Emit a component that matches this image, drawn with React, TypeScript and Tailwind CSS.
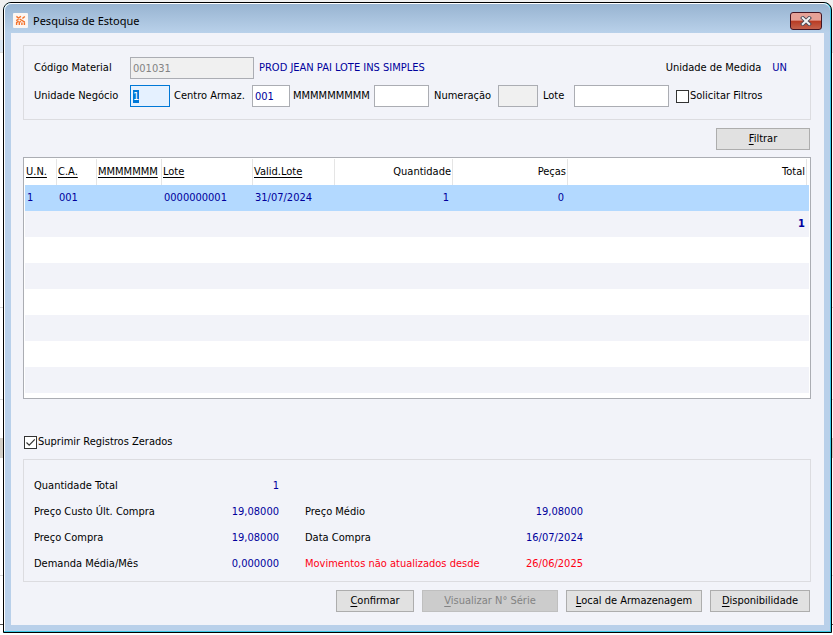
import React, { useEffect, useRef, useState } from "react";
import { clsx } from "clsx";

interface StockRow {
  un: string;
  ca: string;
  lot: string;
  expiry: string;
  quantity: string;
  pieces: string;
}

const ROWS: StockRow[] = [
  { un: "1", ca: "001", lot: "0000000001", expiry: "31/07/2024", quantity: "1", pieces: "0" },
];

// Blank lines that fill the grid below the total line
const EMPTY_ROWS = [0, 1, 2, 3, 4, 5];

const FIELD = "h-[22px] border border-[#abadb3] px-0.5 pt-px text-[#00009c] bg-white outline-none";

const LogoIcon = () => (
  <svg viewBox="0 0 15 15" className="h-[15px] w-[15px] shrink-0" aria-hidden="true">
    <rect width="15" height="15" rx="1" fill="#fdf6f2" />
    <g stroke="#f4722b" strokeWidth="1.4" fill="none">
      <path d="M3.4 3.4l2 1.6L8 3.4M9.4 5.6l2.4-2.2M3.2 7.6l2.4-1.4M6.6 6l5.2 3.2M3.6 12V9.6l2-1.6M6.3 12V9.4l1.6-1.2M8.9 12V9.4M11.4 12V9.6" />
    </g>
  </svg>
);

const CloseIcon = () => (
  <svg viewBox="0 0 12 10" className="h-[10px] w-[12px]" aria-hidden="true">
    <path d="M2.8 2l6.4 6M9.2 2l-6.4 6" stroke="#4b4a58" strokeWidth="3.8" strokeLinecap="square" />
    <path d="M2.8 2l6.4 6M9.2 2l-6.4 6" stroke="#f4f4f4" strokeWidth="2" strokeLinecap="square" />
  </svg>
);

interface CheckProps {
  label: string;
  initial?: boolean;
}

const Check: React.FC<CheckProps> = ({ label, initial = false }) => {
  const [checked, setChecked] = useState(initial);

  return (
    <label className="flex items-center gap-px whitespace-nowrap">
      <span className="relative block h-[13px] w-[13px]">
        <input
          type="checkbox"
          checked={checked}
          onChange={() => setChecked(!checked)}
          className="block h-[13px] w-[13px] appearance-none border border-[#333] bg-white"
        />
        {checked && (
          <svg viewBox="0 0 13 13" className="pointer-events-none absolute inset-0" aria-hidden="true">
            <path d="M2.5 6.5l2.7 2.7L10.8 3.4" stroke="#333" strokeWidth="1.2" fill="none" />
          </svg>
        )}
      </span>
      {label}
    </label>
  );
};

interface ActionButtonProps {
  label: string;
  className: string;
  disabled?: boolean;
}

const ActionButton: React.FC<ActionButtonProps> = ({ label, className, disabled }) => (
  <button
    type="button"
    disabled={disabled}
    className={clsx(
      "h-[22px] border whitespace-nowrap",
      disabled ? "border-[#bfbfbf] bg-[#cccccc] text-[#838383]" : "border-[#adadad] bg-[#e1e1e1]",
      className
    )}
  >
    <span className="underline underline-offset-2">{label[0]}</span>
    {label.slice(1)}
  </button>
);

// The parent window that shows round the edges of the dialog
const Backdrop = () => (
  <div className="absolute inset-0 -z-10 overflow-hidden bg-white" aria-hidden="true">
    <div className="h-10 bg-[#f0f0f0]" />
    <div className="h-[13px] border-b border-[#dcdcdc] bg-[#dbe7f3]" />
    <div className="mt-[254px] border-t border-[#dcdcdc]" />
    <div className="mt-[91px] border-t border-[#dcdcdc]" />
    <div className="mt-[38px] h-5 bg-[#d4d0c8]" />
    <div className="mt-[117px] border-t border-[#dcdcdc]" />
    <div className="mt-[48px] border-t border-[#555]" />
  </div>
);

const Filters = () => {
  const unitRef = useRef<HTMLInputElement>(null);

  useEffect(() => {
    unitRef.current?.focus();
    unitRef.current?.select();
  }, []);

  return (
    <section className="space-y-1.5 border border-[#dcdce0] pt-[11px] pr-[23px] pb-3 pl-2.5">
      <div className="flex items-center">
        <label htmlFor="material" className="w-24 shrink-0">
          Código Material
        </label>
        <input
          id="material"
          disabled
          defaultValue="001031"
          className="h-[22px] w-[124px] border border-[#abadb3] bg-[#f0f0f0] px-0.5 pt-px text-[#838383]"
        />
        <span className="ml-[5px] text-[#00009c]">PROD JEAN PAI LOTE INS SIMPLES</span>
        <span className="ml-auto">Unidade de Medida</span>
        <span className="ml-[11px] text-[#00009c]">UN</span>
      </div>
      <div className="flex items-center whitespace-nowrap">
        <label htmlFor="unit" className="w-24 shrink-0">
          Unidade Negócio
        </label>
        <input
          id="unit"
          ref={unitRef}
          defaultValue="1"
          className="h-[22px] w-10 border border-[#0078d7] bg-[#e5f1ff] px-0.5 text-[#00009c] outline-none selection:bg-[#0078d7] selection:text-white"
        />
        <label htmlFor="center" className="ml-1 w-[78px] shrink-0">
          Centro Armaz.
        </label>
        <input id="center" defaultValue="001" className={clsx(FIELD, "w-[38px]")} />
        <label htmlFor="attribute" className="ml-[3px] w-[77px] shrink-0 overflow-hidden">
          MMMMMMMMMM
        </label>
        <input id="attribute" className={clsx(FIELD, "ml-1 w-[55px]")} />
        <label htmlFor="numbering" className="ml-[5px] w-16 shrink-0">
          Numeração
        </label>
        <input
          id="numbering"
          disabled
          className="h-[22px] w-10 border border-[#abadb3] bg-[#f0f0f0]"
        />
        <label htmlFor="lot" className="ml-[5px] w-[31px] shrink-0">
          Lote
        </label>
        <input id="lot" className={clsx(FIELD, "mr-[7px] w-[95px]")} />
        <Check label="Solicitar Filtros" />
      </div>
    </section>
  );
};

const TH = "border-r border-[#e5e5e5] px-px text-left font-normal overflow-hidden";
const TH_RIGHT = "border-r border-[#e5e5e5] px-px text-right font-normal";
const LINK = "underline underline-offset-2";

const StockTable = () => (
  <div className="border border-[#abadb3] bg-white pt-px pr-px pb-[5px] pl-px">
    <table className="w-full table-fixed border-separate border-spacing-0 whitespace-nowrap">
      <colgroup>
        <col className="w-8" />
        <col className="w-10" />
        <col className="w-[65px]" />
        <col className="w-[91px]" />
        <col className="w-[82px]" />
        <col className="w-[118px]" />
        <col className="w-[115px]" />
        <col />
        <col className="w-0.5" />
      </colgroup>
      <thead>
        <tr className="h-[26px]">
          <th className={TH}><span className={LINK}>U.N.</span></th>
          <th className={TH}><span className={LINK}>C.A.</span></th>
          <th className={TH}><span className={LINK}>MMMMMMM</span></th>
          <th className={TH}><span className={LINK}>Lote</span></th>
          <th className={TH}><span className={LINK}>Valid.Lote</span></th>
          <th className={TH_RIGHT}>Quantidade</th>
          <th className={TH_RIGHT}>Peças</th>
          <th className={TH_RIGHT}>Total</th>
          <th className="p-0" />
        </tr>
      </thead>
      <tbody className="text-[#00009c]">
        {ROWS.map((row) => (
          <tr key={row.lot} className="h-[26px] bg-[#b3d9ff]">
            <td className="px-0.5">{row.un}</td>
            <td className="px-0.5">{row.ca}</td>
            <td />
            <td className="px-0.5">{row.lot}</td>
            <td className="px-0.5">{row.expiry}</td>
            <td className="px-1 text-right">{row.quantity}</td>
            <td className="px-1 text-right">{row.pieces}</td>
            <td colSpan={2} />
          </tr>
        ))}
        <tr className="h-[26px] bg-[#f2f3f9]">
          <td colSpan={9} className="px-1 text-right font-bold">
            1
          </td>
        </tr>
        {EMPTY_ROWS.map((row) => (
          <tr key={row} className="h-[26px] odd:bg-white even:bg-[#f2f3f9]">
            <td colSpan={9} />
          </tr>
        ))}
      </tbody>
    </table>
  </div>
);

const Summary = () => (
  <section className="border border-[#dcdce0] pt-[13px] pb-1 pl-2.5">
    <dl className="grid auto-rows-[26px] grid-cols-[145px_100px_204px_100px] items-center whitespace-nowrap [&>dd]:text-right [&>dd]:text-[#00009c]">
      <dt>Quantidade Total</dt>
      <dd>1</dd>
      <dt className="col-start-1">Preço Custo Últ. Compra</dt>
      <dd>19,08000</dd>
      <dt className="pl-[26px]">Preço Médio</dt>
      <dd>19,08000</dd>
      <dt>Preço Compra</dt>
      <dd>19,08000</dd>
      <dt className="pl-[26px]">Data Compra</dt>
      <dd>16/07/2024</dd>
      <dt>Demanda Média/Mês</dt>
      <dd>0,000000</dd>
      <dt className="pl-[26px] text-[#ff0014]">Movimentos não atualizados desde</dt>
      <dd className="text-[#ff0014]!">26/06/2025</dd>
    </dl>
  </section>
);

export default function App() {
  return (
    <div className="relative z-0 pt-0.5 pr-px pb-0.5 pl-[3px] font-['DejaVu_Sans_Condensed','DejaVu_Sans',sans-serif] text-[11px] leading-4 text-black">
      <Backdrop />
      <div className="rounded-t-lg border border-black bg-[#3cc8e6] pr-px pb-px">
        <div className="rounded-t-[7px] border-t border-l border-white bg-[#b9d0ea] pr-1.5 pb-1.5 pl-1.5">
          <header className="-mx-1.5 flex h-[29px] items-center rounded-t-[7px] bg-linear-to-b from-[#98b4d1] to-[#b9d1ea] pt-1 pr-2 pl-2">
            <LogoIcon />
            <h1 className="ml-[5px] font-['Noto_Sans',sans-serif]">Pesquisa de Estoque</h1>
            <button
              type="button"
              aria-label="Fechar"
              className="ml-auto flex h-[18px] w-8 items-center justify-center rounded-[3px] border border-[#431422] bg-linear-to-b from-[#e6a197] from-45% to-[#c4614b] via-[#b83a22] via-50%"
            >
              <CloseIcon />
            </button>
          </header>
          <main className="bg-[#f2f3f9] pt-3 pr-[13px] pb-[13px] pl-3">
            <Filters />
            <div className="mt-2 mb-[7px] flex justify-end pr-px">
              <ActionButton label="Filtrar" className="w-[94px]" />
            </div>
            <StockTable />
            <div className="mt-[35px] mb-[9px] flex pl-px">
              <Check label="Suprimir Registros Zerados" initial />
            </div>
            <Summary />
            <div className="mt-2 flex justify-end gap-2 pr-px">
              <ActionButton label="Confirmar" className="w-[78px]" />
              <ActionButton label="Visualizar N° Série" className="w-[136px]" disabled />
              <ActionButton label="Local de Armazenagem" className="w-[136px]" />
              <ActionButton label="Disponibilidade" className="w-[100px]" />
            </div>
          </main>
        </div>
      </div>
    </div>
  );
}
